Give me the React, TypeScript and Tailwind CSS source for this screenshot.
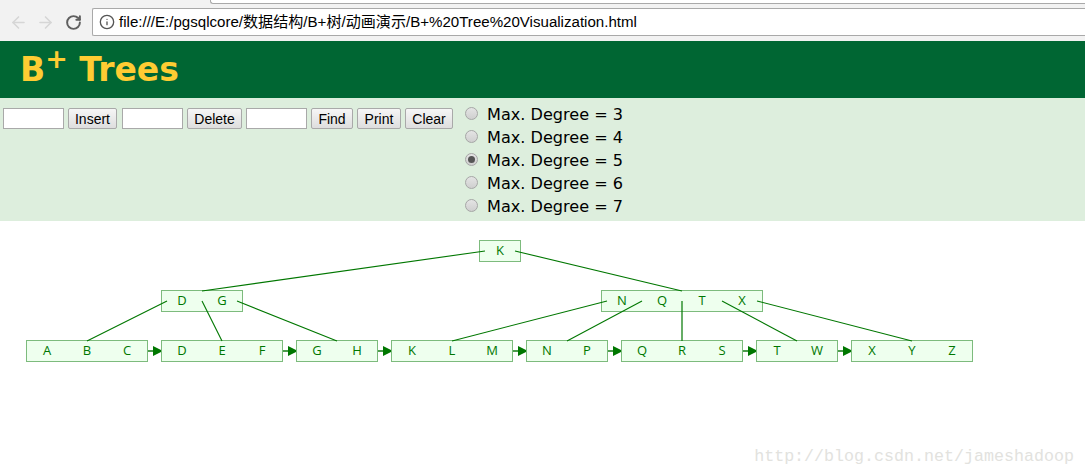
import { ArrowLeft, ArrowRight, Info, RotateCw } from 'lucide-react';

const DEGREES = [3, 4, 5, 6, 7];

const NODES = [
  { x: 479, y: 19, keys: ['K'] },
  { x: 161, y: 69, keys: ['D', 'G'] },
  { x: 601, y: 69, keys: ['N', 'Q', 'T', 'X'] },
  { x: 26, y: 119, keys: ['A', 'B', 'C'] },
  { x: 161, y: 119, keys: ['D', 'E', 'F'] },
  { x: 296, y: 119, keys: ['G', 'H'] },
  { x: 391, y: 119, keys: ['K', 'L', 'M'] },
  { x: 526, y: 119, keys: ['N', 'P'] },
  { x: 621, y: 119, keys: ['Q', 'R', 'S'] },
  { x: 756, y: 119, keys: ['T', 'W'] },
  { x: 851, y: 119, keys: ['X', 'Y', 'Z'] },
];

// parent -> child edges, in canvas coordinates
const EDGES = [
  [485, 30, 202, 70],
  [515, 30, 682, 70],
  [167, 80, 87, 120],
  [202, 80, 222, 120],
  [237, 80, 337, 120],
  [607, 80, 452, 120],
  [642, 80, 567, 120],
  [682, 80, 682, 120],
  [722, 80, 797, 120],
  [757, 80, 912, 120],
];

// x where each leaf link starts
const LINKS = [142, 277, 372, 507, 602, 737, 832];

function TextInput() {
  return <input className="h-[21px] w-[61px] border border-[#a9a9a9] bg-white" />;
}

function Btn({ label, className }: { label: string; className: string }) {
  return (
    <button
      className={`h-[21px] rounded-[2px] border border-[#a9a9a9] bg-gradient-to-b from-[#f6f6f6] to-[#dedede] text-[14px] leading-none text-black ${className}`}
    >
      {label}
    </button>
  );
}

export default function App() {
  return (
    <div className="relative h-[476px] w-[1085px] overflow-hidden bg-white font-['Liberation_Sans',sans-serif]">
      {/* Browser chrome */}
      <div className="h-[41px] bg-[#f2f2f2]">
        <div className="flex h-[4px]">
          <div className="h-full w-[210px]" />
          <div className="h-full flex-1 rounded-bl-[3px] border-b border-l border-[#a9a9a9] bg-white" />
        </div>
        <div className="flex items-start pt-[4px]">
          <div className="flex h-[28px] w-[92px] items-center pl-[9px]">
            <ArrowLeft className="h-[19px] w-[19px] text-[#d6d6d6]" strokeWidth={2} />
            <ArrowRight className="ml-[8px] h-[19px] w-[19px] text-[#d6d6d6]" strokeWidth={2} />
            <RotateCw className="ml-[10px] h-[17px] w-[17px] text-[#5f5f5f]" strokeWidth={2.75} />
          </div>
          <div className="flex h-[28px] flex-1 items-center rounded-l-[2px] border border-r-0 border-[#a9a9a9] bg-white pl-[6px]">
            <Info className="h-[16px] w-[16px] text-[#555]" strokeWidth={2} />
            <span className="ml-[4px] text-[15.08px] text-black font-['Liberation_Sans','Noto_Sans_CJK_SC',sans-serif]">
              file:///E:/pgsqlcore/数据结构/B+树/动画演示/B+%20Tree%20Visualization.html
            </span>
          </div>
        </div>
      </div>

      {/* Title */}
      <div className="flex h-[57px] items-center bg-[#006633] pl-[20px]">
        <h1 className="text-[33px] leading-none font-bold text-[#ffcc33] font-['DejaVu_Sans',sans-serif]">
          B<sup className="text-[27px] leading-none">+</sup> Trees
        </h1>
      </div>

      {/* Controls */}
      <div className="flex h-[123px] bg-[#ddeedd] pl-[3px]">
        <div className="mt-[10px] flex h-[21px] items-center gap-[4px]">
          <TextInput />
          <Btn label="Insert" className="mr-px w-[49px]" />
          <TextInput />
          <Btn label="Delete" className="w-[55px]" />
          <TextInput />
          <Btn label="Find" className="w-[42px]" />
          <Btn label="Print" className="w-[44px]" />
          <Btn label="Clear" className="w-[48px]" />
        </div>
        <div className="ml-[12px] mt-[4px] flex flex-col">
          {DEGREES.map((d) => (
            <label key={d} className="flex h-[23px] items-center">
              <span className="mr-[9px] flex h-[13px] w-[13px] items-center justify-center rounded-full border border-[#a6a6a6] bg-gradient-to-b from-[#e4e4e4] to-[#cfcfcf]">
                {d === 5 && <span className="h-[7px] w-[7px] rounded-full bg-[#555]" />}
              </span>
              <span className="pt-[3px] text-[16.1px] text-black font-['DejaVu_Sans',sans-serif]">
                Max. Degree = {d}
              </span>
            </label>
          ))}
        </div>
      </div>

      {/* Tree canvas */}
      <div className="relative h-[255px]">
        <svg className="absolute inset-0 h-full w-full" viewBox="0 0 1085 255">
          {LINKS.map((x) => (
            <g key={x}>
              <line x1={x} y1={130} x2={x + 13} y2={130} stroke="#4d9d4d" strokeWidth={2} />
              <polygon points={`${x + 11},125 ${x + 21},130 ${x + 11},135`} fill="#007700" />
            </g>
          ))}
        </svg>
        {NODES.map((n) => (
          <div
            key={`${n.x}-${n.y}`}
            className="absolute flex h-[22px] border border-[#7dbb7d] bg-[#eeffee]"
            style={{ left: n.x, top: n.y }}
          >
            {n.keys.map((k) => (
              <span
                key={k}
                className="flex w-[40px] items-center justify-center text-[13px] text-[#007700] font-['Open_Sans',sans-serif]"
              >
                {k}
              </span>
            ))}
          </div>
        ))}
        <svg className="absolute inset-0 h-full w-full" viewBox="0 0 1085 255">
          {EDGES.map(([x1, y1, x2, y2]) => (
            <line
              key={`${x1}-${x2}`}
              x1={x1}
              y1={y1}
              x2={x2}
              y2={y2}
              stroke="#007700"
              strokeWidth={x1 === x2 ? 2 : 1.1}
              strokeOpacity={x1 === x2 ? 0.6 : 1}
            />
          ))}
        </svg>
      </div>

      {/* Watermark */}
      <div className="absolute right-[11px] bottom-[10px] text-[16.67px] leading-none text-[#e2e2de] font-['Liberation_Mono',monospace]">
        http://blog.csdn.net/jameshadoop
      </div>
    </div>
  );
}
